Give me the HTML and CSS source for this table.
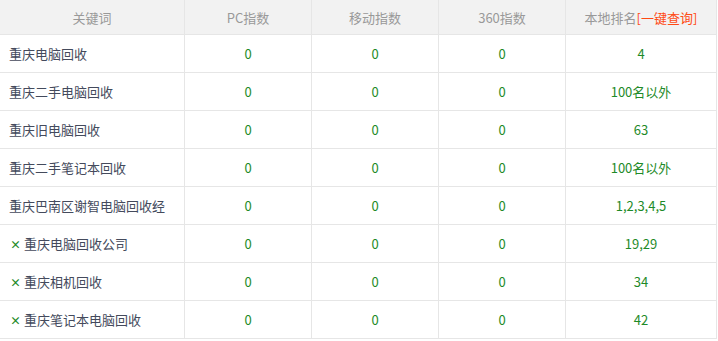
FILE: index.html
```html
<!DOCTYPE html>
<html lang="zh-CN">
<head>
<meta charset="utf-8">
<title>关键词排名</title>
<link rel="stylesheet" href="styles.css">
</head>
<body>
<table class="rank-table">
  <colgroup>
    <col class="c-kw">
    <col class="c-num">
    <col class="c-num">
    <col class="c-num">
    <col class="c-rank">
  </colgroup>
  <thead>
    <tr>
      <th>关键词</th>
      <th>PC指数</th>
      <th>移动指数</th>
      <th>360指数</th>
      <th>本地排名<a class="query" href="#">[一键查询]</a></th>
    </tr>
  </thead>
  <tbody>
    <tr><td class="kw">重庆电脑回收</td><td>0</td><td>0</td><td>0</td><td>4</td></tr>
    <tr><td class="kw">重庆二手电脑回收</td><td>0</td><td>0</td><td>0</td><td>100名以外</td></tr>
    <tr><td class="kw">重庆旧电脑回收</td><td>0</td><td>0</td><td>0</td><td>63</td></tr>
    <tr><td class="kw">重庆二手笔记本回收</td><td>0</td><td>0</td><td>0</td><td>100名以外</td></tr>
    <tr><td class="kw">重庆巴南区谢智电脑回收经</td><td>0</td><td>0</td><td>0</td><td>1,2,3,4,5</td></tr>
    <tr><td class="kw"><span class="del">×</span>重庆电脑回收公司</td><td>0</td><td>0</td><td>0</td><td>19,29</td></tr>
    <tr><td class="kw"><span class="del">×</span>重庆相机回收</td><td>0</td><td>0</td><td>0</td><td>34</td></tr>
    <tr><td class="kw"><span class="del">×</span>重庆笔记本电脑回收</td><td>0</td><td>0</td><td>0</td><td>42</td></tr>
  </tbody>
</table>
</body>
</html>
```
FILE: styles.css
```css
html, body {
  margin: 0;
  padding: 0;
  background: #fff;
}
body {
  font-family: "Noto Sans CJK SC", "Noto Sans", sans-serif;
  font-size: 13px;
}
.rank-table {
  border-collapse: separate;
  border-spacing: 0;
  table-layout: fixed;
  width: 717px;
}
.c-kw { width: 185px; }
.c-num { width: 127px; }
.c-rank { width: 151px; }
.rank-table th,
.rank-table td {
  box-sizing: border-box;
  border-right: 1px solid #e6e6e6;
  border-bottom: 1px solid #e6e6e6;
  padding: 0;
  text-align: center;
  white-space: nowrap;
  overflow: hidden;
}
.rank-table th {
  height: 35px;
  background: #f2f2f2;
  color: #999;
  font-weight: normal;
}
.rank-table td {
  height: 38px;
  color: #1e8a28;
}
.rank-table td.kw {
  text-align: left;
  padding-left: 9px;
  color: #444a5c;
}
.query {
  color: #ff4a14;
  text-decoration: none;
}
.del {
  display: inline-block;
  color: #1e8a28;
  font-size: 11px;
  font-weight: bold;
  margin-left: 1px;
  margin-right: 3px;
}
```
